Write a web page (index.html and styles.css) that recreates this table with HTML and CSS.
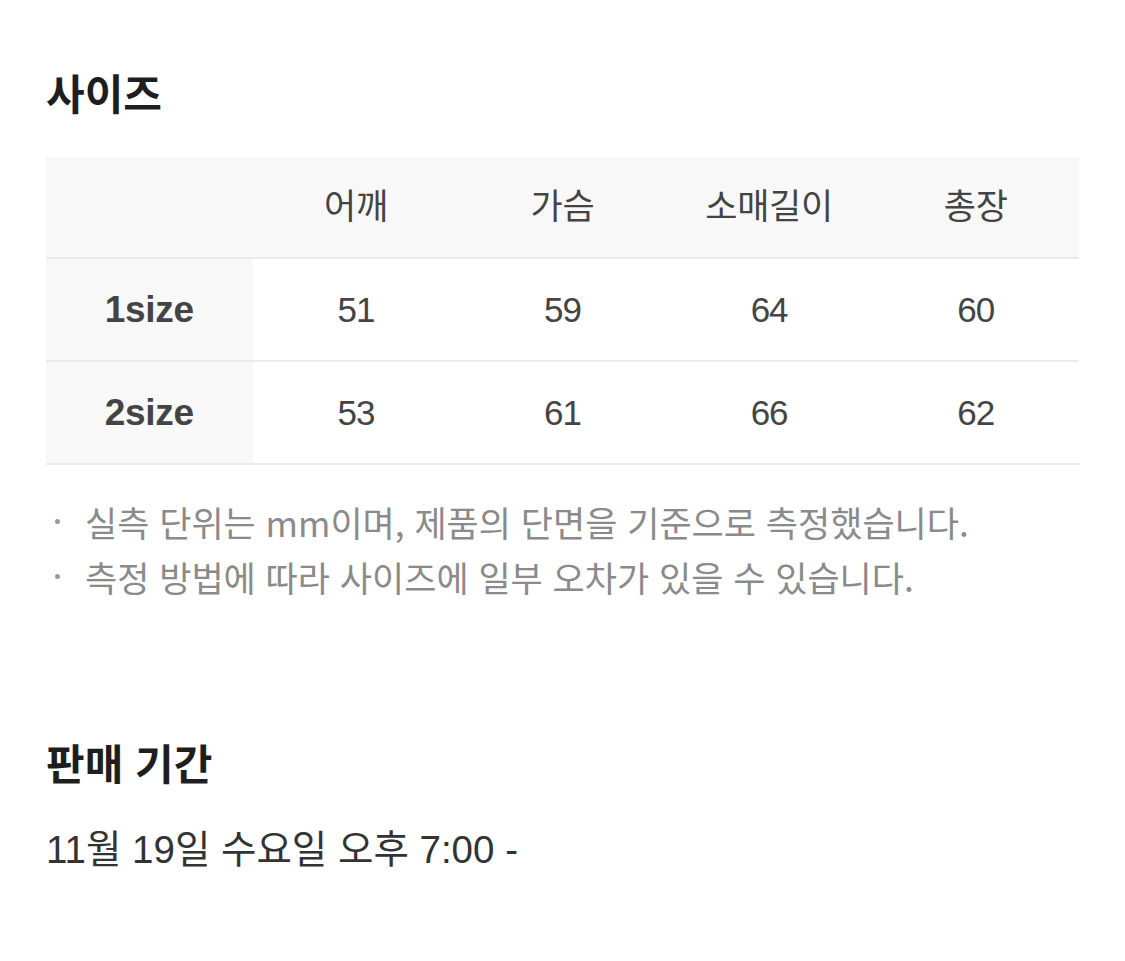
FILE: index.html
```html
<!DOCTYPE html>
<html lang="ko">
<head>
<meta charset="utf-8">
<link rel="stylesheet" href="styles.css">
</head>
<body>
<main class="page">
  <section class="section">
    <h2 class="title">사이즈</h2>
    <div class="size-table">
      <div class="row head">
        <div class="cell label"></div>
        <div class="cell">어깨</div>
        <div class="cell">가슴</div>
        <div class="cell">소매길이</div>
        <div class="cell">총장</div>
      </div>
      <div class="row">
        <div class="cell label">1size</div>
        <div class="cell num">51</div>
        <div class="cell num">59</div>
        <div class="cell num">64</div>
        <div class="cell num">60</div>
      </div>
      <div class="row">
        <div class="cell label">2size</div>
        <div class="cell num">53</div>
        <div class="cell num">61</div>
        <div class="cell num">66</div>
        <div class="cell num">62</div>
      </div>
    </div>
    <ul class="notes">
      <li>실측 단위는 mm이며, 제품의 단면을 기준으로 측정했습니다.</li>
      <li>측정 방법에 따라 사이즈에 일부 오차가 있을 수 있습니다.</li>
    </ul>
  </section>
  <section class="section period">
    <h2 class="title">판매 기간</h2>
    <p class="date">11월 19일 수요일 오후 7:00 -</p>
  </section>
</main>
</body>
</html>
```
FILE: styles.css
```css
* { box-sizing: border-box; }
html, body { margin: 0; padding: 0; background: #fff; }
body {
  font-family: "Liberation Sans", "Noto Sans CJK KR", sans-serif;
  color: #222;
}
.page {
  width: 1125px;
  padding: 64px 46px 0 46px;
}
.title {
  margin: 0;
  font-family: "Noto Sans CJK KR", sans-serif;
  font-size: 42px;
  font-weight: 700;
  line-height: 56px;
  color: #1e1e1e;
  letter-spacing: 0;
}
.size-table {
  margin-top: 37px;
  width: 1033px;
}
.row {
  display: grid;
  grid-template-columns: repeat(5, 1fr);
  height: 103px;
  border-bottom: 2px solid #ebebeb;
}
.row.head {
  height: 102px;
  background: #f8f8f8;
  padding-bottom: 8px;
}
.cell {
  display: flex;
  align-items: center;
  justify-content: center;
  font-size: 35px;
  color: #444;
  font-family: "Noto Sans CJK KR", sans-serif;
  letter-spacing: -0.3px;
}
.cell.num {
  font-family: "Liberation Sans", sans-serif;
  font-size: 35px;
  letter-spacing: -1px;
}
.cell.label {
  background: #f8f8f8;
  font-family: "Liberation Sans", sans-serif;
  font-weight: 700;
  font-size: 37px;
  letter-spacing: -0.3px;
}
.row.head .cell.label { background: transparent; }
.notes {
  list-style: none;
  margin: 29px 0 0 0;
  padding: 0;
  color: #8a8a8a;
  font-family: "Noto Sans CJK KR", sans-serif;
  font-size: 35px;
  line-height: 55px;
  letter-spacing: 0;
}
.notes li {
  display: flex;
  align-items: center;
}
.notes li::before {
  content: "";
  width: 5px;
  height: 5px;
  border-radius: 50%;
  background: #999;
  margin: 0 25px 0 9px;
  flex: none;
}
.period {
  margin-top: 130px;
}
.date {
  margin: 36px 0 0 0;
  font-family: "Liberation Sans", "Noto Sans CJK KR", sans-serif;
  font-size: 38.5px;
  line-height: 48px;
  color: #333;
  letter-spacing: 0;
}
```
